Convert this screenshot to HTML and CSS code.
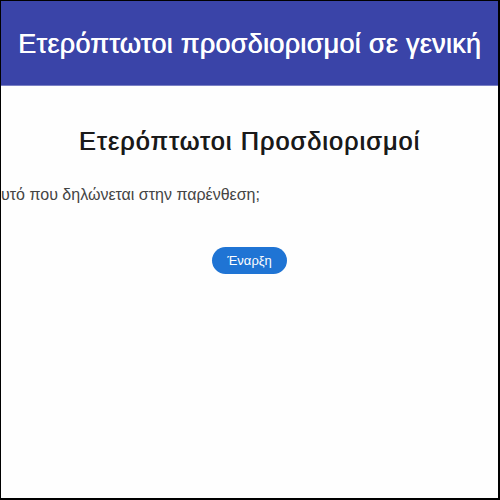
FILE: index.html
```html
<!DOCTYPE html>
<html lang="el">
<head>
    <meta charset="UTF-8">
    <meta name="viewport" content="width=device-width, initial-scale=1.0">
    <title>Ετερόπτωτοι προσδιορισμοί</title>
    <link rel="stylesheet" href="styles.css">
</head>
<body>
    <div class="cadre">
        <header class="entete">
            <h1>Ετερόπτωτοι προσδιορισμοί σε γενική</h1>
        </header>

        <main class="contenu">
            <h2 class="titre-quiz">Ετερόπτωτοι Προσδιορισμοί</h2>
            <p class="consigne">υτό που δηλώνεται στην παρένθεση;</p>
            <div class="zone-bouton">
                <button class="bouton-debut">Έναρξη</button>
            </div>
        </main>
    </div>
</body>
</html>
```

FILE: styles.css
```css
/* Page du quiz */
body {
    margin: 0;
    padding: 0;
    background-color: #ffffff;
    font-family: Arial, "Liberation Sans", sans-serif;
}

.cadre {
    box-sizing: border-box;
    width: 500px;
    height: 500px;
    border: 1px solid #000000;
    border-right-width: 2px;
    border-bottom-width: 2px;
    overflow: hidden;
    background-color: #fefefe;
}

.entete {
    background-color: #3a44a8;
    height: 84px;
    display: flex;
    align-items: center;
    justify-content: center;
    border-bottom: 1px solid #7a80c4;
}

.entete h1 {
    margin: 0;
    color: #ffffff;
    font-size: 27px;
    font-weight: normal;
    letter-spacing: 0.3px;
    text-shadow: 0.6px 0 0 #ffffff;
    white-space: nowrap;
    padding-top: 2px;
}

.contenu {
    padding-top: 41px;
}

.titre-quiz {
    margin: 0;
    text-align: center;
    font-size: 25px;
    font-weight: normal;
    letter-spacing: 1.2px;
    text-shadow: 0.7px 0 0 #1a1a1a;
    color: #1a1a1a;
}

.consigne {
    margin: 30px 0 0 0;
    font-size: 16px;
    color: #444444;
    white-space: nowrap;
}

.zone-bouton {
    display: flex;
    justify-content: center;
    margin-top: 43px;
}

.bouton-debut {
    background-color: #1f74d4;
    color: #ffffff;
    border: none;
    border-radius: 14px;
    font-family: inherit;
    font-size: 13px;
    padding: 6px 14px;
    height: 27px;
    width: 75px;
    cursor: pointer;
}
```
